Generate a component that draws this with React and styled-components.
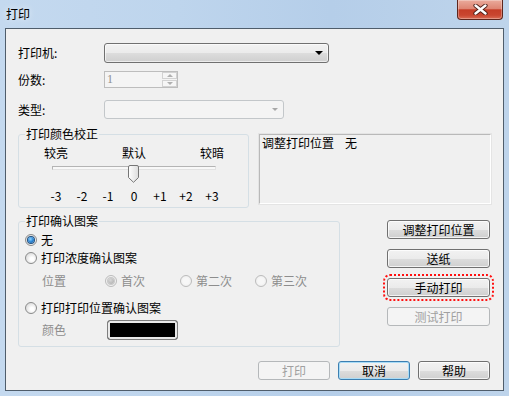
import styled, { createGlobalStyle } from 'styled-components';

const FONT = `"Noto Sans CJK SC", "Liberation Sans", sans-serif`;

const GlobalStyle = createGlobalStyle`
  html, body {
    margin: 0;
    padding: 0;
  }
  body {
    font-family: ${FONT};
    font-size: 12px;
    color: #000;
    background: #bcd2ea;
  }
  * {
    box-sizing: border-box;
  }
`;

// window frame
const Window = styled.div`
  width: 509px;
  height: 396px;
  display: flex;
  flex-direction: column;
  overflow: hidden;
  background: linear-gradient(90deg, #c4d9ef 0%, #bed5ed 35%, #b5cee9 65%, #bed4eb 100%);
`;

const TitleBar = styled.div`
  height: 28px;
  flex: none;
  display: flex;
  align-items: flex-start;
  padding-left: 6px;
`;

const Title = styled.span`
  margin-top: 7px;
  line-height: 14px;
  text-shadow: 0 0 6px rgba(255, 255, 255, 0.9);
`;

const CloseButton = styled.div`
  margin-left: auto;
  margin-right: 6px;
  width: 46px;
  height: 20px;
  display: flex;
  align-items: center;
  justify-content: center;
  border: 1px solid #5e261d;
  border-top: none;
  border-radius: 0 0 4px 4px;
  background: linear-gradient(#eaab9c 0%, #de8573 45%, #c53d27 52%, #c94630 80%, #da6c55 100%);
  box-shadow: inset 0 0 0 1px rgba(255, 255, 255, 0.3);
`;

const Client = styled.div`
  flex: 1;
  margin: 0 5px 5px 5px;
  border: 1px solid #4f5d6b;
  background: #f0f0f0;
  padding: 14px 12px 0 12px;
  display: flex;
  flex-direction: column;
`;

// top form rows
const FormRow = styled.div`
  display: flex;
  align-items: center;
  height: ${(p) => p.$h}px;
  margin-top: ${(p) => p.$mt || 0}px;
`;

const FieldLabel = styled.span`
  width: 86px;
  line-height: 14px;
`;

const Combo = styled.div`
  width: ${(p) => p.$w}px;
  height: 100%;
  display: flex;
  align-items: center;
  justify-content: flex-end;
  padding-right: 5px;
  border-radius: 3px;
  border: 1px solid ${(p) => (p.$disabled ? '#c3c7ca' : '#707070')};
  background: ${(p) =>
    p.$disabled
      ? '#f4f4f4'
      : 'linear-gradient(#f2f2f2 0%, #ebebeb 50%, #dddddd 51%, #cfcfcf 100%)'};
  box-shadow: ${(p) => (p.$disabled ? 'none' : 'inset 0 0 0 1px rgba(255,255,255,0.6)')};
`;

const Arrow = styled.span`
  width: 0;
  height: 0;
  border-left: ${(p) => (p.$disabled ? 3.5 : 4)}px solid transparent;
  border-right: ${(p) => (p.$disabled ? 3.5 : 4)}px solid transparent;
  border-top: ${(p) => (p.$disabled ? 3 : 4)}px solid ${(p) => (p.$disabled ? '#a7a7a7' : '#000')};
`;

const Spin = styled.div`
  width: 74px;
  height: 100%;
  display: flex;
  border: 1px solid #bdbdbd;
  background: #f4f4f4;
`;

const SpinValue = styled.span`
  flex: 1;
  padding-left: 2px;
  line-height: 15px;
  color: #8d8d8d;
  font-family: "Liberation Serif", serif;
`;

const SpinButtons = styled.div`
  width: 15px;
  display: flex;
  flex-direction: column;
  gap: 1px;
  padding: 0 0 0 0;
`;

const SpinHalf = styled.div`
  flex: 1;
  display: flex;
  align-items: center;
  justify-content: center;
  border: 1px solid #d2d2d2;
  background: #f6f6f6;
`;

const SmallTri = styled.span`
  width: 0;
  height: 0;
  border-left: 3px solid transparent;
  border-right: 3px solid transparent;
  ${(p) => (p.$up ? 'border-bottom' : 'border-top')}: 3px solid #b0b0b0;
`;

// group boxes
const Section = styled.div`
  display: flex;
  align-items: flex-start;
  margin-top: ${(p) => p.$mt}px;
  gap: ${(p) => p.$gap || 0}px;
`;

const Group = styled.fieldset`
  margin: 0;
  min-width: 0;
  width: ${(p) => p.$w}px;
  flex: none;
  border: 1px solid #d5dfe5;
  border-radius: 3px;
  padding: 0 6px ${(p) => p.$pb}px 6px;
`;

const Legend = styled.legend`
  padding: 0 1px;
  line-height: 14px;
  font-size: 12px;
`;

const Scale = styled.div`
  margin-left: 18px;
  display: grid;
  grid-template-columns: repeat(7, 26px);
  margin-top: ${(p) => p.$mt || 0}px;
  height: 14px;
  line-height: 14px;
`;

const ScaleText = styled.span`
  grid-column: ${(p) => p.$col};
  justify-self: center;
  white-space: nowrap;
`;

const Slider = styled.div`
  position: relative;
  margin-left: 27px;
  width: 164px;
  height: 17px;
`;

const Track = styled.div`
  margin-top: 6px;
  height: 4px;
  border: 1px solid;
  border-color: #b4b4b4 #e2e2e2 #e2e2e2 #b4b4b4;
  background: #f8f8f8;
`;

const Thumb = styled.svg`
  position: absolute;
  left: 76px;
  top: -1px;
`;

const InfoBox = styled.div`
  margin-top: 7px;
  width: 232px;
  height: 70px;
  padding: 1px 2px;
  line-height: 14px;
  border: 1px solid;
  border-color: #b9b9b9 #ffffff #ffffff #b9b9b9;
  box-shadow: 0 0 0 1px #e4e4e4;
`;

const InfoValue = styled.span`
  margin-left: 11px;
`;

// radios
const OptionRow = styled.div`
  display: flex;
  align-items: center;
  height: ${(p) => p.$h || 16}px;
  margin-top: ${(p) => p.$mt || 0}px;
  margin-left: ${(p) => p.$indent || 0}px;
`;

const Muted = styled.span`
  width: ${(p) => p.$w}px;
  flex: none;
  line-height: 14px;
  color: #8d8d8d;
`;

const RadioLabel = styled.label`
  display: flex;
  align-items: center;
  gap: 4px;
  width: ${(p) => (p.$w ? `${p.$w}px` : 'auto')};
  flex: none;
  line-height: 14px;
  color: ${(p) => (p.$disabled ? '#8d8d8d' : '#000')};
`;

const RadioDot = styled.span`
  position: relative;
  width: 12px;
  height: 12px;
  flex: none;
  border-radius: 50%;
  border: 1px solid ${(p) => (p.$disabled ? '#bcbcbc' : '#8a8b8b')};
  background: ${(p) =>
    p.$disabled
      ? 'radial-gradient(circle at 50% 50%, #f7f7f7 40%, #e8e8e8 100%)'
      : 'radial-gradient(circle at 60% 60%, #ffffff 20%, #e6e6e6 60%, #cfcfcf 100%)'};

  &::after {
    content: '';
    display: ${(p) => (p.$checked ? 'block' : 'none')};
    position: absolute;
    left: 2px;
    top: 2px;
    width: 6px;
    height: 6px;
    border-radius: 50%;
    background: ${(p) =>
      p.$disabled
        ? 'radial-gradient(circle at 40% 35%, #d8d8d8 0%, #a9a9a9 100%)'
        : 'radial-gradient(circle at 40% 35%, #8fd4ff 0%, #2d87d6 50%, #164f8c 100%)'};
    box-shadow: 0 0 0 1px ${(p) => (p.$disabled ? '#c8c8c8' : '#1e4f7f')};
  }
`;

const Swatch = styled.span`
  width: 71px;
  height: 20px;
  flex: none;
  border: 1px solid #7e7e7e;
  border-radius: 3px;
  background: #000;
  box-shadow: inset 0 0 0 2px #e9e9e9;
`;

// buttons
const ButtonColumn = styled.div`
  margin-left: auto;
  margin-right: 1px;
  padding-top: 6px;
  display: flex;
  flex-direction: column;
  gap: 10px;
`;

const Button = styled.button`
  width: ${(p) => p.$w}px;
  height: 19px;
  padding: 0;
  font-family: ${FONT};
  font-size: 12px;
  line-height: 17px;
  color: #000;
  border: 1px solid ${(p) => (p.$default ? '#3c7fb1' : '#707070')};
  border-radius: 3px;
  background: linear-gradient(#f2f2f2 0%, #ebebeb 50%, #dddddd 51%, #cfcfcf 100%);
  box-shadow: inset 0 0 0 1px ${(p) => (p.$default ? '#a9dcf7' : 'rgba(255,255,255,0.75)')};
  outline: ${(p) => (p.$focusRing ? '2px dotted #ff1010' : 'none')};
  outline-offset: 2px;

  &:disabled {
    border-color: #b5b8ba;
    background: #f4f4f4;
    color: #a0a0a0;
    box-shadow: none;
  }
`;

const Footer = styled.div`
  margin-top: 14px;
  margin-right: 1px;
  display: flex;
  justify-content: flex-end;
  gap: 8px;
`;

const Radio = ({ checked, disabled, children, w }) => (
  <RadioLabel $disabled={disabled} $w={w}>
    <RadioDot $checked={checked} $disabled={disabled} />
    {children}
  </RadioLabel>
);

const ticks = ['-3', '-2', '-1', '0', '+1', '+2', '+3'];

const App = () => {
  return (
    <>
      <GlobalStyle />
      <Window>
        <TitleBar>
          <Title>打印</Title>
          <CloseButton>
            <svg width="15" height="11" viewBox="0 0 15 11">
              <path d="M2.5 1.5 L12.5 9.5 M12.5 1.5 L2.5 9.5" stroke="#4a1d16" strokeWidth="4.2" strokeLinecap="round" />
              <path d="M2.5 1.5 L12.5 9.5 M12.5 1.5 L2.5 9.5" stroke="#ffffff" strokeWidth="2.4" strokeLinecap="round" />
            </svg>
          </CloseButton>
        </TitleBar>

        <Client>
          <FormRow $h={20}>
            <FieldLabel>打印机:</FieldLabel>
            <Combo $w={225}>
              <Arrow />
            </Combo>
          </FormRow>
          <FormRow $h={17} $mt={8}>
            <FieldLabel>份数:</FieldLabel>
            <Spin>
              <SpinValue>1</SpinValue>
              <SpinButtons>
                <SpinHalf>
                  <SmallTri $up />
                </SpinHalf>
                <SpinHalf>
                  <SmallTri />
                </SpinHalf>
              </SpinButtons>
            </Spin>
          </FormRow>
          <FormRow $h={19} $mt={12}>
            <FieldLabel>类型:</FieldLabel>
            <Combo $w={180} $disabled>
              <Arrow $disabled />
            </Combo>
          </FormRow>

          <Section $mt={8} $gap={10}>
            <Group $w={231} $pb={4}>
              <Legend>打印颜色校正</Legend>
              <Scale $mt={5}>
                <ScaleText $col={1}>较亮</ScaleText>
                <ScaleText $col={4}>默认</ScaleText>
                <ScaleText $col={7}>较暗</ScaleText>
              </Scale>
              <Slider>
                <Track />
                <Thumb width="11" height="18" viewBox="0 0 11 18">
                  <defs>
                    <linearGradient id="thumbFill" x1="0" y1="0" x2="1" y2="0">
                      <stop offset="0" stopColor="#ffffff" />
                      <stop offset="1" stopColor="#dcdcdc" />
                    </linearGradient>
                  </defs>
                  <path
                    d="M0.5 2 Q0.5 0.5 2 0.5 H9 Q10.5 0.5 10.5 2 V12.5 L5.5 17.3 L0.5 12.5 Z"
                    fill="url(#thumbFill)"
                    stroke="#767676"
                  />
                </Thumb>
              </Slider>
              <Scale $mt={6}>
                {ticks.map((t, i) => (
                  <ScaleText key={t} $col={i + 1}>
                    {t}
                  </ScaleText>
                ))}
              </Scale>
            </Group>
            <InfoBox>
              调整打印位置<InfoValue>无</InfoValue>
            </InfoBox>
          </Section>

          <Section $mt={6}>
            <Group $w={322} $pb={6}>
              <Legend>打印确认图案</Legend>
              <OptionRow $mt={4}>
                <Radio checked>无</Radio>
              </OptionRow>
              <OptionRow $mt={2}>
                <Radio>打印浓度确认图案</Radio>
              </OptionRow>
              <OptionRow $mt={7} $indent={17}>
                <Muted $w={63}>位置</Muted>
                <Radio checked disabled w={75}>首次</Radio>
                <Radio disabled w={75}>第二次</Radio>
                <Radio disabled>第三次</Radio>
              </OptionRow>
              <OptionRow $mt={11}>
                <Radio>打印打印位置确认图案</Radio>
              </OptionRow>
              <OptionRow $mt={4} $h={20} $indent={17}>
                <Muted $w={65}>颜色</Muted>
                <Swatch />
              </OptionRow>
            </Group>
            <ButtonColumn>
              <Button $w={103}>调整打印位置</Button>
              <Button $w={103}>送纸</Button>
              <Button $w={103} $focusRing>手动打印</Button>
              <Button $w={103} disabled>测试打印</Button>
            </ButtonColumn>
          </Section>

          <Footer>
            <Button $w={72} disabled>打印</Button>
            <Button $w={72} $default>取消</Button>
            <Button $w={72}>帮助</Button>
          </Footer>
        </Client>
      </Window>
    </>
  );
};

export default App;
